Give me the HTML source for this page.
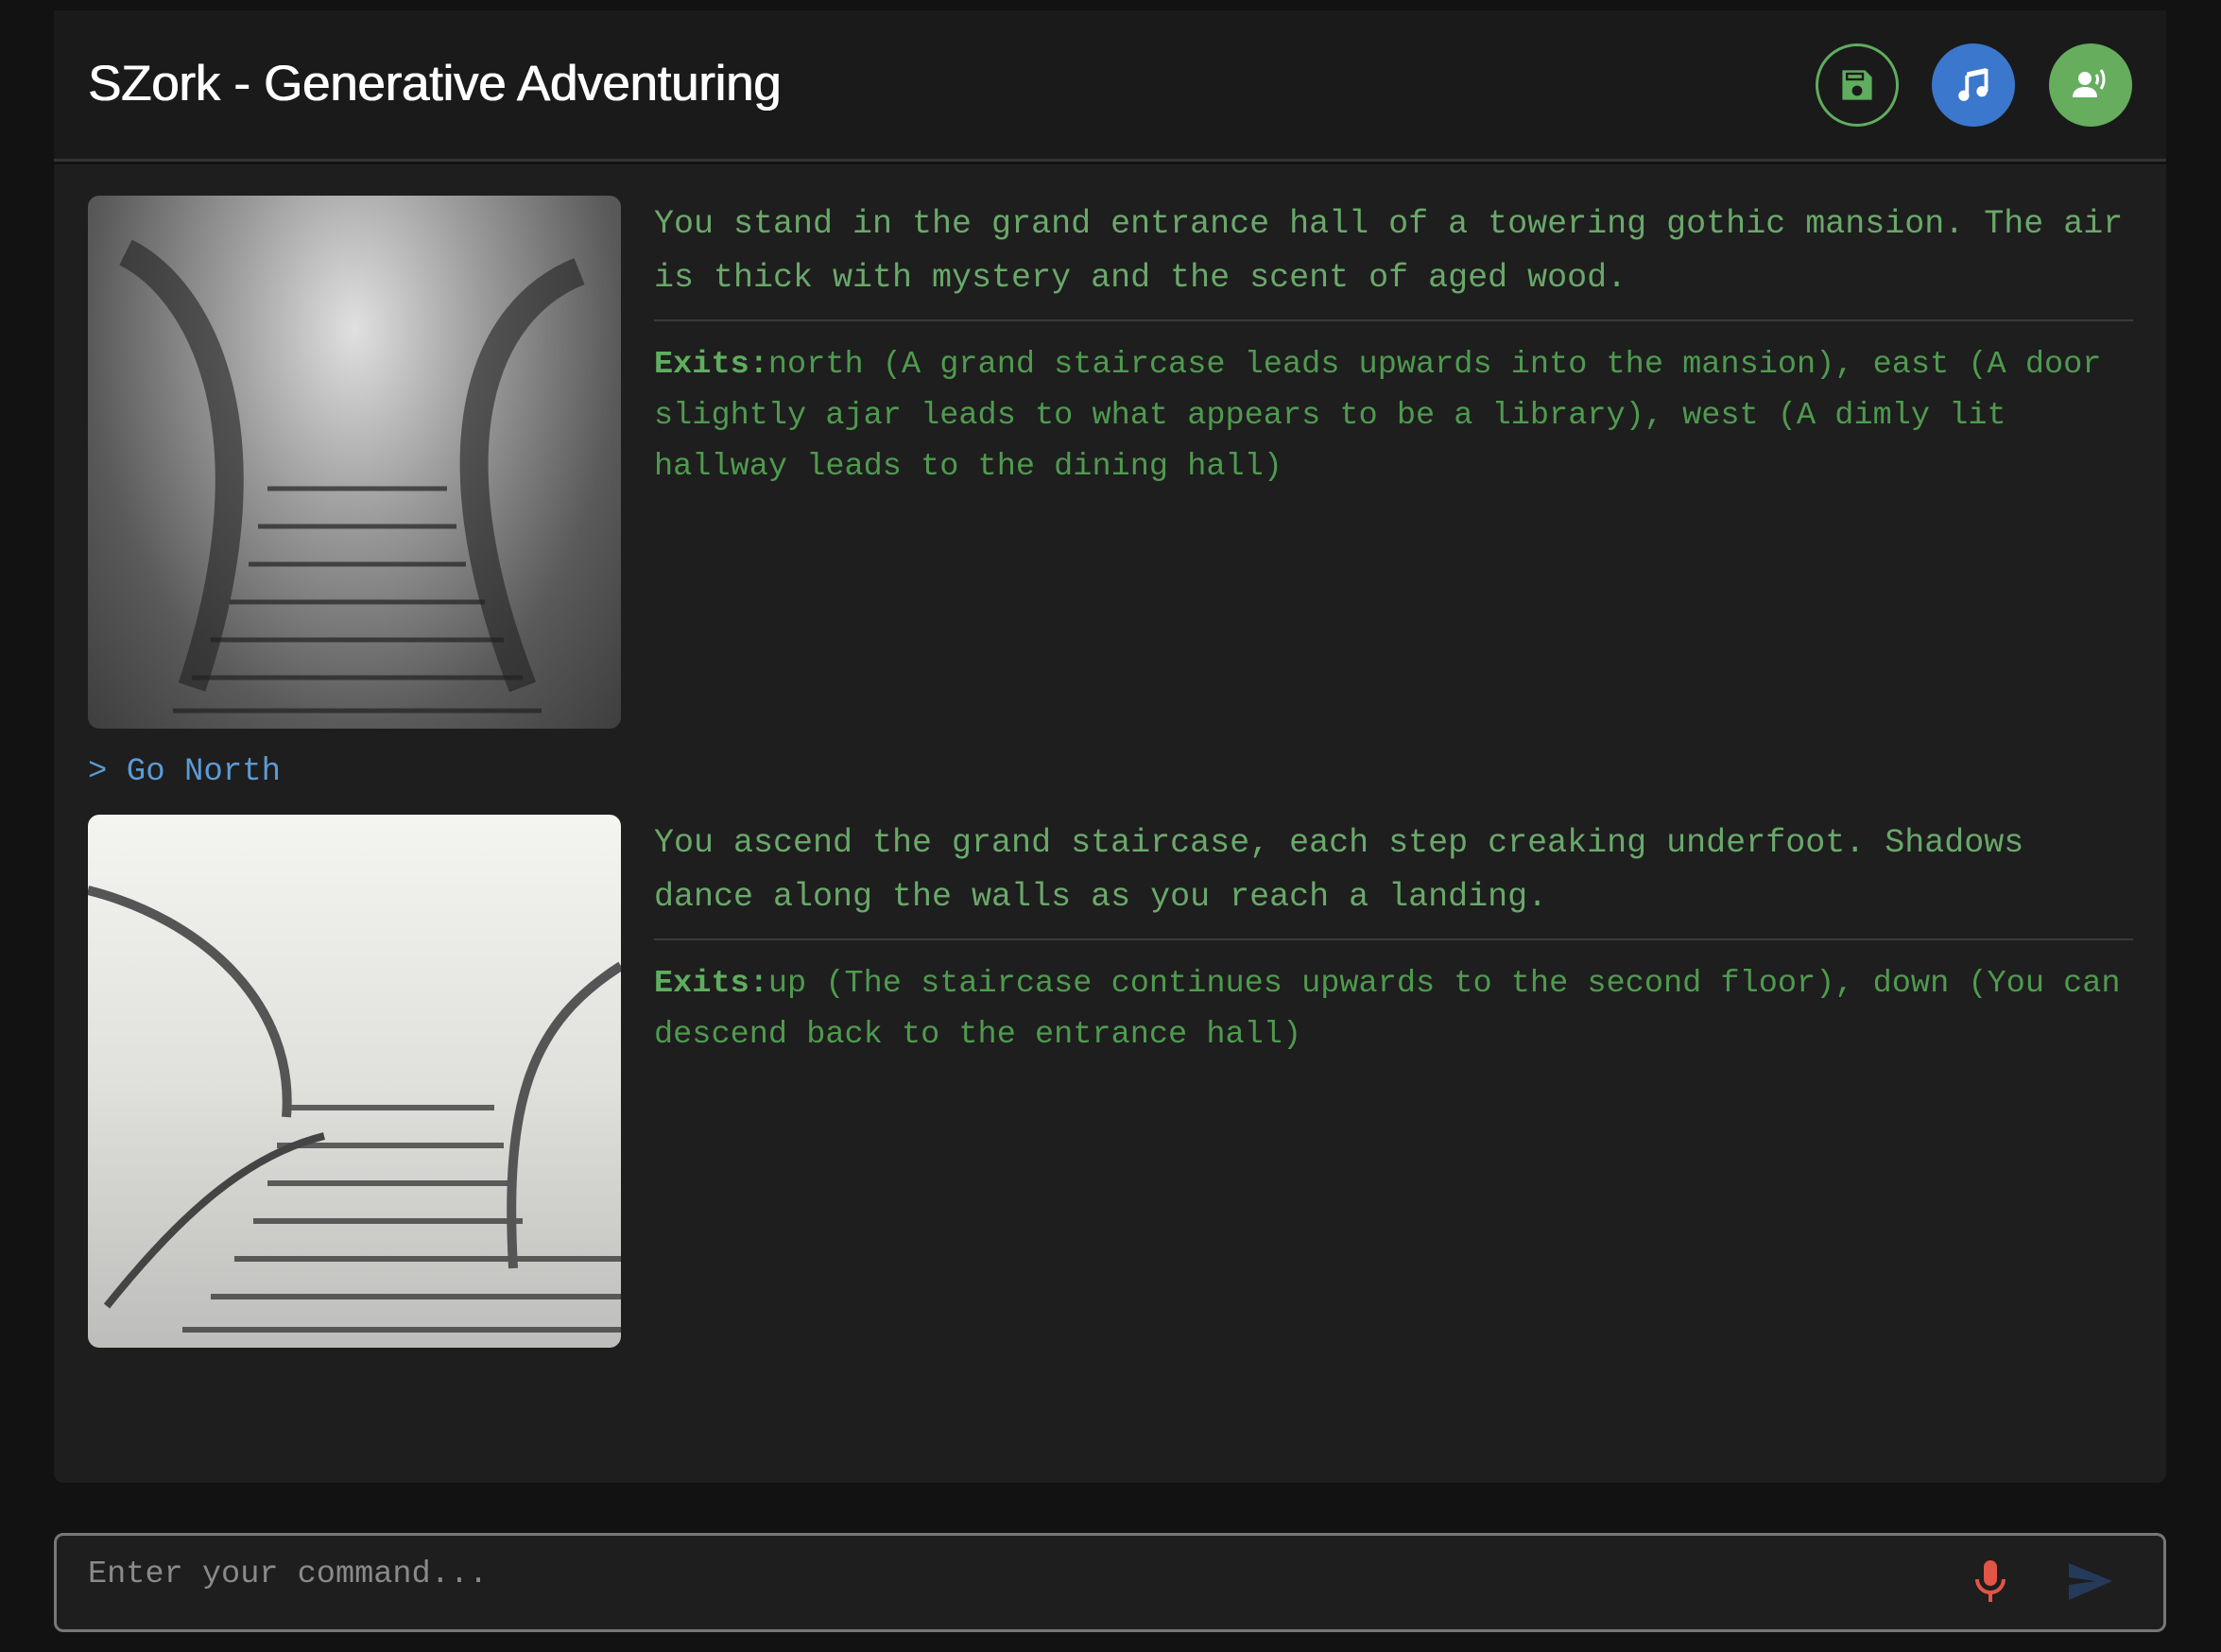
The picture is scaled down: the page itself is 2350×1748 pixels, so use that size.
<!DOCTYPE html>
<html><head><meta charset="utf-8"><style>
*{margin:0;padding:0;box-sizing:border-box}
body{width:2350px;height:1748px;background:#121212;position:relative;overflow:hidden;font-family:"Liberation Sans",sans-serif}
.hdr{position:absolute;left:57px;top:11px;width:2235px;height:160px;background:#1a1a1a;border-bottom:3px solid #333}
.title{position:absolute;left:36px;top:47px;font-size:53px;color:#fff;letter-spacing:-0.3px;text-shadow:0.6px 0 0 #fff,-0.3px 0 0 #fff}
.btn{position:absolute;top:35px;width:88px;height:88px;border-radius:50%;display:flex;align-items:center;justify-content:center}
.panel{position:absolute;left:57px;top:174px;width:2235px;height:1395px;background:#1e1e1e;border-radius:0 0 10px 10px}
.img{position:absolute;left:36px;width:564px;height:564px;border-radius:12px;overflow:hidden}
.mono{font-family:"Liberation Mono",monospace;position:absolute}
.desc{left:635px;width:1568px;font-size:35px;line-height:57px;color:#6aa86a}
.exits{left:635px;width:1568px;font-size:33.6px;line-height:54px;color:#4f9a4f}
.hr{position:absolute;left:635px;width:1565px;height:2px;background:#3a3a3a}
.cmd{left:36px;font-size:34px;color:#5b9bd5}
.inp{position:absolute;left:57px;top:1622px;width:2235px;height:105px;border:3px solid #777;border-radius:10px;background:#1e1e1e}
</style></head><body>
<div class="hdr">
<div class="title">SZork - Generative Adventuring</div>
<div class="btn" style="left:1864px;border:3px solid #5fad5f">
<svg width="36" height="36" viewBox="0 0 30 30"><path d="M2 2h20l6 6v20H2z" fill="#5fad5f"/><rect x="5" y="4" width="16" height="7" fill="#1a1a1a"/><rect x="7" y="6" width="12" height="3" fill="#5fad5f"/><circle cx="15" cy="20" r="4.5" fill="#1a1a1a"/></svg></div>
<div class="btn" style="left:1987px;background:#3a77cd">
<svg width="36" height="36" viewBox="0 0 32 32"><path d="M10 7l18-4v19" stroke="#fff" stroke-width="3.5" fill="none"/><path d="M10 7v19" stroke="#fff" stroke-width="3.5"/><rect x="10" y="4" width="18" height="5" fill="#fff" transform="skewY(-12) translate(0,2)"/><circle cx="7" cy="26" r="5" fill="#fff"/><circle cx="24" cy="22" r="5" fill="#fff"/></svg></div>
<div class="btn" style="left:2111px;background:#66ad5e">
<svg width="42" height="36" viewBox="0 0 42 36"><circle cx="15" cy="11" r="7" fill="#fff"/><path d="M2 31c0-8 6-11 13-11s13 3 13 11z" fill="#fff"/><path d="M27 7c2 3 2 7 0 10" stroke="#fff" stroke-width="3" fill="none"/><path d="M32 2c4 6 4 14 0 20" stroke="#fff" stroke-width="3" fill="none"/></svg></div>
</div>
<div class="panel">
<div class="img" style="top:33px;background:radial-gradient(ellipse at 50% 25%,#e0e0e0 0%,#9a9a9a 35%,#5a5a5a 70%,#3e3e3e 100%)">
<svg width="564" height="564" viewBox="0 0 564 564"><g stroke="#222" stroke-width="5" opacity="0.7">
<line x1="190" y1="310" x2="380" y2="310"/><line x1="180" y1="350" x2="390" y2="350"/><line x1="170" y1="390" x2="400" y2="390"/><line x1="150" y1="430" x2="420" y2="430"/><line x1="130" y1="470" x2="440" y2="470"/><line x1="110" y1="510" x2="460" y2="510"/><line x1="90" y1="545" x2="480" y2="545"/></g>
<path d="M40 60 C120 100 200 250 110 520" stroke="#222" stroke-width="30" fill="none" opacity="0.6"/><path d="M520 80 C420 120 360 260 460 520" stroke="#222" stroke-width="30" fill="none" opacity="0.6"/></svg></div>
<div class="mono desc" style="top:35px">You stand in the grand entrance hall of a towering gothic mansion. The air is thick with mystery and the scent of aged wood.</div>
<div class="hr" style="top:164px"></div>
<div class="mono exits" style="top:185px"><b style="color:#5fad5f">Exits:</b>north (A grand staircase leads upwards into the mansion), east (A door slightly ajar leads to what appears to be a library), west (A dimly lit hallway leads to the dining hall)</div>
<div class="mono cmd" style="top:624px">&gt; Go North</div>
<div class="img" style="top:688px;background:linear-gradient(180deg,#f4f4f0 0%,#e0e0dc 50%,#bdbdbb 100%)">
<svg width="564" height="564" viewBox="0 0 564 564"><g stroke="#333" stroke-width="6" opacity="0.75">
<line x1="210" y1="310" x2="430" y2="310"/><line x1="200" y1="350" x2="440" y2="350"/><line x1="190" y1="390" x2="450" y2="390"/><line x1="175" y1="430" x2="460" y2="430"/><line x1="155" y1="470" x2="564" y2="470"/><line x1="130" y1="510" x2="564" y2="510"/><line x1="100" y1="545" x2="564" y2="545"/></g>
<path d="M0 80 C120 110 220 200 210 320" stroke="#555" stroke-width="10" fill="none"/><path d="M564 160 C470 220 440 300 450 480" stroke="#555" stroke-width="10" fill="none"/><path d="M20 520 C100 420 170 360 250 340" stroke="#444" stroke-width="8" fill="none"/></svg></div>
<div class="mono desc" style="top:690px">You ascend the grand staircase, each step creaking underfoot. Shadows dance along the walls as you reach a landing.</div>
<div class="hr" style="top:819px"></div>
<div class="mono exits" style="top:840px"><b style="color:#5fad5f">Exits:</b>up (The staircase continues upwards to the second floor), down (You can descend back to the entrance hall)</div>
</div>
<div class="inp">
<div class="mono" style="left:33px;top:22px;font-size:33.6px;color:#8a8a8a">Enter your command...</div>
<svg style="position:absolute;left:2030px;top:25px" width="32" height="46" viewBox="0 0 32 46"><rect x="9" y="1" width="14" height="27" rx="7" fill="#e05545"/><path d="M2 21a14 14 0 0 0 28 0" stroke="#e05545" stroke-width="4" fill="none"/><rect x="14" y="34" width="4" height="11" fill="#e05545"/></svg>
<svg style="position:absolute;left:2128px;top:28px" width="48" height="42" viewBox="0 0 48 42"><path d="M1 1L47 20L1 40L1 24L30 20L1 16Z" fill="#253a5a"/></svg>
</div>
</body></html>
